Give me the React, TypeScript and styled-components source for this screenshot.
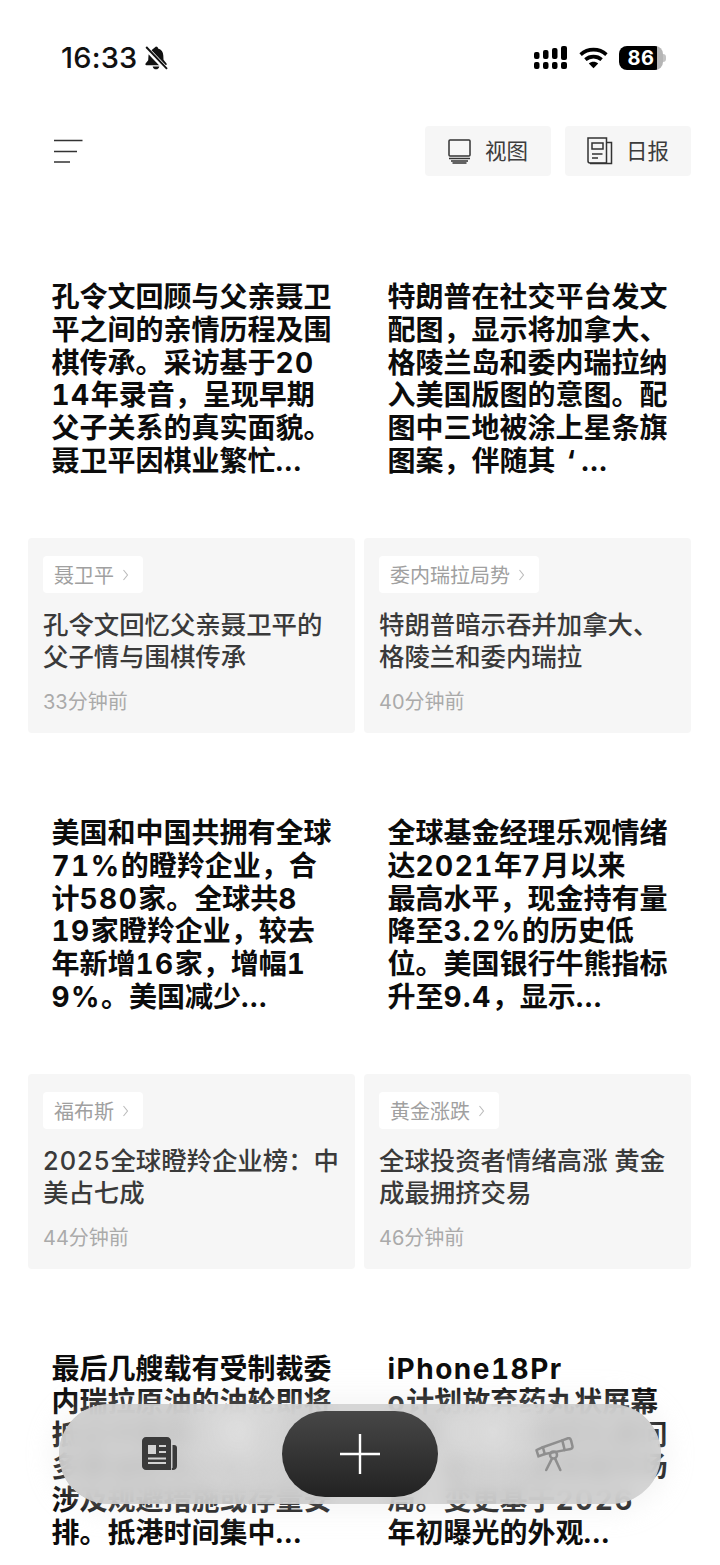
import React from "react";
import styled, { createGlobalStyle } from "styled-components";

const Global = createGlobalStyle`
  html, body { margin: 0; padding: 0; background: #fff; }
  body { font-family: "Inter", "Noto Sans CJK SC", sans-serif; }
`;

const Page = styled.div`
  position: relative;
  width: 720px;
  height: 1565px;
  overflow: hidden;
  background: #fff;
`;

const StatusBar = styled.div`
  height: 116px;
  display: flex;
  justify-content: space-between;
  align-items: flex-start;
  padding: 38px 54px 0 61px;
  box-sizing: border-box;
`;

const StatusGroup = styled.div<{ $gap: number }>`
  display: flex;
  align-items: center;
  gap: ${(p) => p.$gap}px;
  height: 40px;
`;

const Clock = styled.span`
  font-size: 29px;
  font-weight: 500;
  color: #111;
  line-height: 40px;
  letter-spacing: 0.2px;
`;

const Battery = styled.div`
  position: relative;
  width: 44px;
  height: 24px;
  border-radius: 8px;
  overflow: hidden;
  background: linear-gradient(90deg, #000 0 86%, #b5b5b5 86% 100%);
  display: flex;
  align-items: center;
  justify-content: center;
  color: #fff;
  font-size: 20px;
  font-weight: 700;
  letter-spacing: 0.5px;
`;

const BatteryNub = styled.span`
  width: 3px;
  height: 8px;
  margin-left: -11px;
  border-radius: 0 3px 3px 0;
  background: #c4c4c4;
`;

const Header = styled.div`
  height: 50px;
  margin-top: 10px;
  padding: 0 29px 0 54px;
  display: flex;
  align-items: center;
  justify-content: space-between;
`;

const Actions = styled.div`
  display: flex;
  gap: 14px;
`;

const ActionButton = styled.div`
  width: 126px;
  height: 50px;
  border-radius: 4px;
  background: #f6f6f6;
  display: flex;
  align-items: center;
  justify-content: center;
  gap: 13px;
`;

const ActionLabel = styled.span`
  font-family: "Noto Sans CJK SC", sans-serif;
  color: #3c3c3c;
  font-size: 21.5px;
  line-height: 26px;
  margin-top: -2px;
  font-weight: 400;
`;

const Grid = styled.div`
  margin-top: 105px;
  padding: 0 29px 0 28px;
  display: grid;
  grid-template-columns: 327px 327px;
  column-gap: 9px;
  row-gap: 84px;
`;

const Item = styled.article`
  display: flex;
  flex-direction: column;
`;

const Summary = styled.div`
  height: 257px;
  padding: 0 0 0 23.5px;
  font-size: 28px;
  line-height: 32.8px;
  font-weight: 700;
  color: #0c0c0c;
  font-variant-numeric: tabular-nums;
`;

const SummaryLine = styled.div`
  white-space: nowrap;
`;

const LatinRun = styled.span<{ $spacing: number }>`
  letter-spacing: ${(p) => p.$spacing}px;
`;

const QuoteMark = styled.span`
  padding: 0 6px 0 11px;
`;

const Card = styled.div`
  height: 195px;
  box-sizing: border-box;
  padding: 18px 15px 0;
  border-radius: 4px;
  background: #f6f6f6;
`;

const Tag = styled.div`
  display: inline-flex;
  align-items: center;
  gap: 8px;
  height: 37px;
  padding: 0 14px 0 11px;
  border-radius: 4px;
  background: #fff;
  color: #a0a0a0;
  font-size: 20px;
`;

const Title = styled.div`
  margin-top: 16px;
  font-size: 25.4px;
  line-height: 32px;
  font-weight: 500;
  color: #3a3a3a;
  white-space: nowrap;
`;

const Time = styled.div`
  margin-top: 16px;
  font-size: 20px;
  line-height: 26px;
  color: #aaa;
`;

const FloatingBar = styled.div`
  position: absolute;
  left: 59px;
  top: 1404px;
  width: 602px;
  height: 100px;
  border-radius: 50px;
  display: flex;
  align-items: center;
  justify-content: space-between;
  padding: 0 87px 0 83px;
  box-sizing: border-box;
  backdrop-filter: blur(9px);
  background:
    radial-gradient(circle at 30% 28%, rgba(222, 222, 222, 0.9), rgba(222, 222, 222, 0) 16%),
    radial-gradient(circle at 72% 28%, rgba(222, 222, 222, 0.9), rgba(222, 222, 222, 0) 14%),
    rgba(208, 208, 208, 0.9);
  box-shadow: 0 0 24px 8px rgba(225, 225, 225, 0.35);
`;

const PlusButton = styled.div`
  position: absolute;
  left: 223px;
  top: 7px;
  width: 156px;
  height: 86px;
  border-radius: 43px;
  background: linear-gradient(180deg, #474747 0%, #222 100%);
  display: flex;
  align-items: center;
  justify-content: center;
`;

const latin = /([A-Za-z0-9%]+(?:\.[0-9]+%?)?|\.\.\.)/;

const Spaced = (p: { text: string; spacing: number }) => (
  <>
    {p.text.split(latin).map((part, i) =>
      i % 2 === 1 ? (
        <LatinRun key={i} $spacing={p.spacing}>
          {part}
        </LatinRun>
      ) : (
        part
      )
    )}
  </>
);

const C = "\uFF0C";
const COLON = "\uFF1A";

type News = { summary: string[]; tag: string; title: string[]; time: string };

const news: News[] = [
  {
    summary: ["孔令文回顾与父亲聂卫", "平之间的亲情历程及围", "棋传承。采访基于20", `14年录音${C}呈现早期`, "父子关系的真实面貌。", "聂卫平因棋业繁忙..."],
    tag: "聂卫平",
    title: ["孔令文回忆父亲聂卫平的", "父子情与围棋传承"],
    time: "33分钟前",
  },
  {
    summary: ["特朗普在社交平台发文", `配图${C}显示将加拿大、`, "格陵兰岛和委内瑞拉纳", "入美国版图的意图。配", "图中三地被涂上星条旗", `图案${C}伴随其‘...`],
    tag: "委内瑞拉局势",
    title: ["特朗普暗示吞并加拿大、", "格陵兰和委内瑞拉"],
    time: "40分钟前",
  },
  {
    summary: ["美国和中国共拥有全球", `71%的瞪羚企业${C}合`, "计580家。全球共8", `19家瞪羚企业${C}较去`, `年新增16家${C}增幅1`, "9%。美国减少..."],
    tag: "福布斯",
    title: [`2025全球瞪羚企业榜${COLON}中`, "美占七成"],
    time: "44分钟前",
  },
  {
    summary: ["全球基金经理乐观情绪", "达2021年7月以来", `最高水平${C}现金持有量`, "降至3.2%的历史低", "位。美国银行牛熊指标", `升至9.4${C}显示...`],
    tag: "黄金涨跌",
    title: ["全球投资者情绪高涨 黄金", "成最拥挤交易"],
    time: "46分钟前",
  },
  {
    summary: ["最后几艘载有受制裁委", "内瑞拉原油的油轮即将", `抵达中国港口${C}此次运`, "多艘油轮共计数百万桶", "涉及规避措施或存量安", "排。抵港时间集中..."],
    tag: "",
    title: [],
    time: "",
  },
  {
    summary: ["iPhone18Pr", "o计划放弃药丸状屏幕", `设计${C}改为单挖孔屏问`, `世${C}或将改变高端市场`, "局。变更基于2026", "年初曝光的外观..."],
    tag: "",
    title: [],
    time: "",
  },
];

const Chevron = () => (
  <svg width="7" height="12" viewBox="0 0 7 12" fill="none" stroke="#bbb" strokeWidth="1.1">
    <path d="M1.5 1 L5.500 6 L1.5 11" />
  </svg>
);

const BellOff = () => (
  <svg width="24" height="26" viewBox="0 0 24 26">
    <path d="M12 1.6c1.2 0 2 .8 2.1 1.9 3.400.9 5 3.600 5.200 7l.2 4.200 3 3.900c.5.800.1 1.700-.8 1.700H2.400c-.9 0-1.300-.9-.8-1.700l2.600-3.400.3-4.700c.2-1.500.6-2.900 1.400-4" fill="#111" />
    <path d="M8.700 21.400h6.600c-.3 1.800-1.600 2.900-3.300 2.900s-3-1.100-3.300-2.900z" fill="#111" />
    <path d="M1 2 L22.500 24.500" stroke="#fff" strokeWidth="5" />
    <path d="M2.200 2 L23 23.800" stroke="#111" strokeWidth="1.900" />
  </svg>
);

const Signal = () => (
  <svg width="34" height="24" viewBox="0 0 34 24" fill="#000">
    <rect x="0" y="16" width="5.500" height="7" rx="2" />
    <rect x="9" y="16" width="5.500" height="7" rx="2" />
    <rect x="18" y="16" width="5.500" height="7" rx="2" />
    <rect x="27" y="16" width="6" height="7" rx="2" />
    <rect x="0" y="6" width="5.500" height="7" rx="2" />
    <rect x="9" y="4" width="5.500" height="9" rx="2" />
    <rect x="18" y="2" width="5.500" height="11" rx="2" />
    <rect x="27" y="0" width="6" height="14" rx="2" />
  </svg>
);

const Wifi = () => (
  <svg width="29" height="22" viewBox="0 0 29 22" fill="none" stroke="#000" strokeWidth="3.600">
    <path d="M1.600 7.600C9 1 20 1 27.400 7.600" />
    <path d="M6.400 12.600c4.600-4 11.600-4 16.200 0" />
    <path d="M14.500 21.200 L9.800 16.400c2.700-2.300 6.700-2.300 9.400 0z" fill="#000" stroke="none" />
  </svg>
);

const MenuIcon = () => (
  <svg width="29" height="25" viewBox="0 0 29 25" stroke="#333" strokeWidth="1.600">
    <path d="M0 1.500H28.500M0 12.500H23M0 23H16" />
  </svg>
);

const ViewIcon = () => (
  <svg width="24" height="25" viewBox="0 0 24 25" fill="none" stroke="#333" strokeWidth="1.500">
    <rect x="1" y="1" width="21" height="16" rx="1" />
    <path d="M1 19.500H22M3 22H20M4.500 24H18.500" />
  </svg>
);

const DailyIcon = () => (
  <svg width="26" height="28" viewBox="0 0 26 28" fill="none" stroke="#333" strokeWidth="1.500">
    <path d="M1 1H19.500V26H3c-1.200 0-2-.8-2-2z" />
    <path d="M19.500 5.500H24.500V26.500H3" />
    <rect x="5" y="6" width="11" height="6" />
    <path d="M5 17H15.500M5 21H11" />
  </svg>
);

const NewspaperIcon = () => (
  <svg width="36" height="34" viewBox="0 0 36 34">
    <path d="M4 0H25c2.200 0 4 1.800 4 4V33H4c-2.200 0-4-1.800-4-4V4C0 1.800 1.800 0 4 0z" fill="#3a3a3a" />
    <path d="M29.800 8H32c2 0 3 1.200 3 3V29c0 2.500-1.800 4-4 4h-1.200z" fill="#3a3a3a" />
    <path d="M29.800 6V31" stroke="#cfcfcf" strokeWidth="1.400" />
    <rect x="6" y="8" width="8" height="9" fill="#d2d2d2" />
    <path d="M17 9H24M17 15H24M6 21.500H24M6 26H24" stroke="#d2d2d2" strokeWidth="2" />
  </svg>
);

const TelescopeIcon = () => (
  <svg width="39" height="35" viewBox="0 0 40 36" fill="none" stroke="#8e8e8e" strokeWidth="2.600" strokeLinejoin="round" strokeLinecap="round">
    <path d="M1.500 13.500 L8 10.500 L10 17.500 L3.500 20 Z" />
    <path d="M8 10.500 L28 3.500 L30.500 13.500 L10 17.500" />
    <path d="M28 3.500 L34.500 1 C36 1 36.500 2 37 3.500 L38.500 9.500 C38.700 11 38 12 36.500 12.300 L30.500 13.500" />
    <circle cx="19" cy="18.500" r="3.600" />
    <path d="M17.500 22 L11.500 34M20.500 22 L26 34" />
  </svg>
);

const PlusIcon = () => (
  <svg width="40" height="40" viewBox="0 0 40 40" stroke="#fff" strokeWidth="2.400">
    <path d="M0 20H40M20 0V40" />
  </svg>
);

const SummaryText = (p: { line: string }) => {
  const q = p.line.indexOf("‘");
  if (q < 0) return <Spaced text={p.line} spacing={1.5} />;
  return (
    <>
      {p.line.slice(0, q)}
      <QuoteMark>‘</QuoteMark>
      <Spaced text={p.line.slice(q + 1)} spacing={1.5} />
    </>
  );
};

export default function App() {
  return (
    <Page>
      <Global />
      <StatusBar>
        <StatusGroup $gap={7}>
          <Clock>16:33</Clock>
          <BellOff />
        </StatusGroup>
        <StatusGroup $gap={11}>
          <Signal />
          <Wifi />
          <Battery>86</Battery>
          <BatteryNub />
        </StatusGroup>
      </StatusBar>
      <Header>
        <MenuIcon />
        <Actions>
          <ActionButton>
            <ViewIcon />
            <ActionLabel>视图</ActionLabel>
          </ActionButton>
          <ActionButton>
            <DailyIcon />
            <ActionLabel>日报</ActionLabel>
          </ActionButton>
        </Actions>
      </Header>
      <Grid>
        {news.map((n, i) => (
          <Item key={i}>
            <Summary>
              {n.summary.map((l, j) => (
                <SummaryLine key={j}>
                  <SummaryText line={l} />
                </SummaryLine>
              ))}
            </Summary>
            {n.tag && (
              <Card>
                <Tag>
                  {n.tag}
                  <Chevron />
                </Tag>
                <Title>
                  {n.title.map((t) => (
                    <div key={t}>
                      <Spaced text={t} spacing={1} />
                    </div>
                  ))}
                </Title>
                <Time>{n.time}</Time>
              </Card>
            )}
          </Item>
        ))}
      </Grid>
      <FloatingBar>
        <NewspaperIcon />
        <PlusButton>
          <PlusIcon />
        </PlusButton>
        <TelescopeIcon />
      </FloatingBar>
    </Page>
  );
}
